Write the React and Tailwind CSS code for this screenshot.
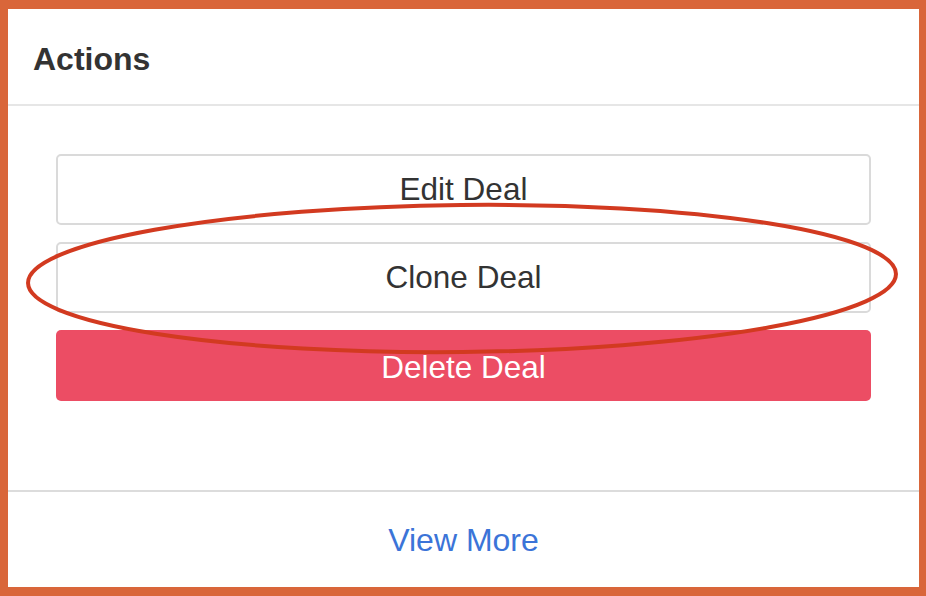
export default function App() {
  return (
    <div className="relative w-[926px] h-[596px] bg-[#d9663a] pt-[9px] pl-[8px] pr-[7px] pb-[9px]" style={{ fontFamily: '"Liberation Sans", Arial, sans-serif' }}>
      <div className="flex flex-col h-full bg-white">
        <div className="h-[97px] flex items-center px-[25px] border-b-2 border-[#e6e6e6] shrink-0">
          <h2 className="text-[32px] font-bold text-[#333333] leading-none pt-[4px]">Actions</h2>
        </div>
        <div className="flex-1 flex flex-col gap-[17px] px-[48px] pt-[48px]">
          <button className="h-[71px] w-full rounded-[5px] border-2 border-[#dadada] bg-white text-[31.5px] text-[#333333] leading-none">Edit Deal</button>
          <button className="h-[71px] w-full rounded-[5px] border-2 border-[#dadada] bg-white text-[31.5px] text-[#333333] leading-none">Clone Deal</button>
          <button className="h-[71px] w-full rounded-[5px] bg-[#ec4d64] text-[31.5px] text-white leading-none pt-[4px]">Delete Deal</button>
        </div>
        <div className="h-[97px] flex items-center justify-center border-t-2 border-[#dcdcdc] shrink-0">
          <span className="text-[32px] text-[#3b74d8] leading-none">View More</span>
        </div>
      </div>
      <svg className="absolute left-0 top-0 pointer-events-none" width="926" height="596" viewBox="0 0 926 596">
        <ellipse cx="462" cy="278.5" rx="434" ry="73.5" fill="none" stroke="#d23a20" strokeWidth="4" transform="rotate(-0.6 462 278.5)" />
      </svg>
    </div>
  );
}
